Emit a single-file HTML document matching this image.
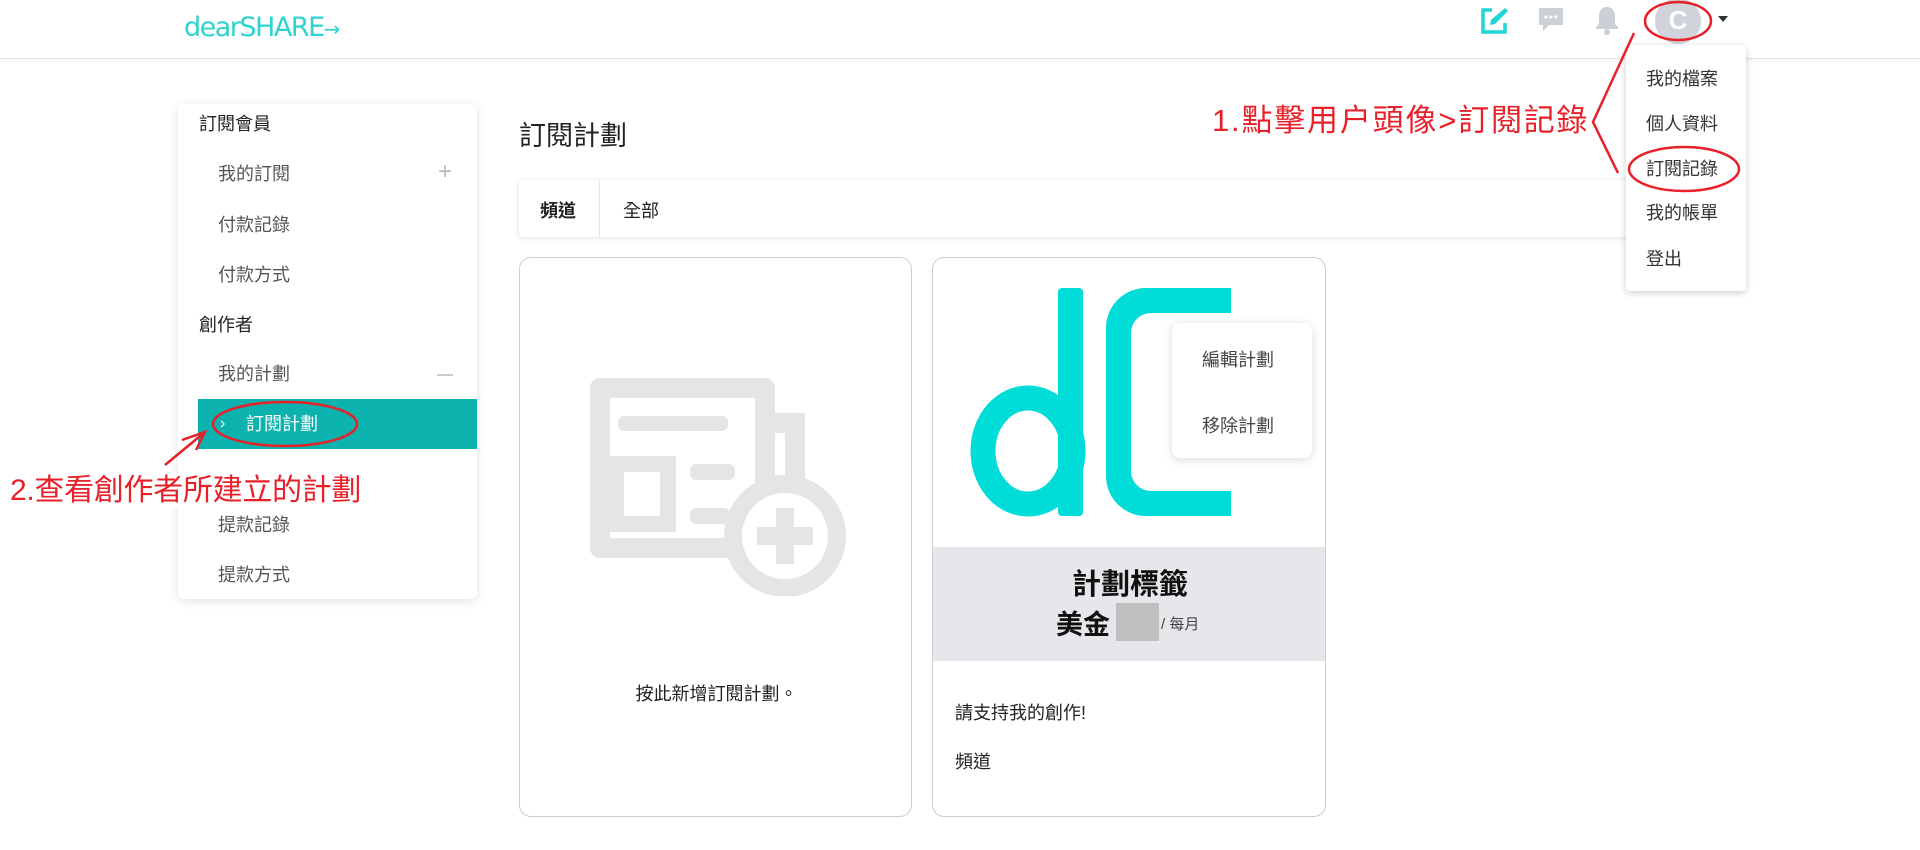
<!DOCTYPE html>
<html><head><meta charset="utf-8"><style>
*{box-sizing:border-box;margin:0;padding:0}
body{width:1920px;height:850px;overflow:hidden;background:#fff;font-family:"Liberation Sans","Noto Sans CJK TC",sans-serif;position:relative;color:#222}
.abs{position:absolute}
.hdr{left:0;top:0;width:1920px;height:59px;border-bottom:1px solid #e3e3e3;box-shadow:0 1px 3px rgba(0,0,0,.06)}
.side{left:178px;top:104px;width:299px;height:495px;background:#fff;border-radius:6px;box-shadow:0 2px 10px rgba(0,0,0,.12)}
.si{position:absolute;font-size:18px;color:#555;line-height:24px}
.sh{color:#222;left:21px}
.card{border:1px solid #ccc;border-radius:12px;background:#fff}
.red{color:#e8202a;font-size:31px;line-height:34px;white-space:nowrap}
.menu div{position:absolute;left:20px;font-size:18px;color:#333;line-height:24px}
</style></head><body>
<div class="abs hdr"></div>
<div class="abs" style="left:184px;top:10px;font-size:27px;color:#2fd3cf;letter-spacing:-1.5px;font-family:'DejaVu Sans',sans-serif;line-height:36px">dearSHARE<span style="font-size:20px">→</span></div>
<!-- icons -->
<svg class="abs" style="left:1478px;top:5px" width="32" height="32" viewBox="0 0 32 32"><path d="M14 5H5v22h22v-9" fill="none" stroke="#1fd6d2" stroke-width="3.5"/><path d="M27 3l3 3-13 13-5 1 1-5z" fill="#1fd6d2"/></svg>
<svg class="abs" style="left:1537px;top:6px" width="28" height="28" viewBox="0 0 28 28"><path d="M2 2h24v17H12l-6 6v-6H2z" fill="#ccd0d6"/><circle cx="9" cy="11" r="1.6" fill="#fff"/><circle cx="14" cy="11" r="1.6" fill="#fff"/><circle cx="19" cy="11" r="1.6" fill="#fff"/></svg>
<svg class="abs" style="left:1594px;top:4px" width="26" height="32" viewBox="0 0 26 32"><path d="M13 3c5 0 8 4 8 9v8l3 3v2H2v-2l3-3v-8c0-5 3-9 8-9z" fill="#ccd0d6"/><circle cx="13" cy="28" r="3" fill="#ccd0d6"/></svg>
<div class="abs" style="left:1655px;top:-2px;width:46px;height:46px;border-radius:50%;background:#d0d3d9;color:#fff;font-size:26px;font-weight:bold;text-align:center;line-height:44px">C</div>
<div class="abs" style="left:1718px;top:16px;width:0;height:0;border-left:5px solid transparent;border-right:5px solid transparent;border-top:6px solid #333"></div>
<!-- sidebar -->
<div class="abs side">
<div class="si sh" style="top:8px">訂閱會員</div>
<div class="si" style="left:40px;top:58px">我的訂閱</div>
<div class="si" style="left:260px;top:56px;color:#bbb;font-size:24px">+</div>
<div class="si" style="left:40px;top:109px">付款記錄</div>
<div class="si" style="left:40px;top:159px">付款方式</div>
<div class="si sh" style="top:209px">創作者</div>
<div class="si" style="left:40px;top:258px">我的計劃</div>
<div class="abs" style="left:259px;top:270px;width:16px;height:2px;background:#ccc"></div>
<div class="abs" style="left:20px;top:295px;width:279px;height:50px;background:#0cb3ae"></div>
<div class="si" style="left:42px;top:308px;color:#fff;font-size:16px">›</div>
<div class="si" style="left:68px;top:308px;color:#fff">訂閱計劃</div>
<div class="si" style="left:40px;top:409px">提款記錄</div>
<div class="si" style="left:40px;top:459px">提款方式</div>
</div>
<!-- main -->
<div class="abs" style="left:519px;top:114px;font-size:27px;color:#222">訂閱計劃</div>
<div class="abs" style="left:519px;top:180px;width:1200px;height:57px;background:#fff;border-radius:4px;box-shadow:0 1px 6px rgba(0,0,0,.12)">
<div class="abs" style="left:21px;top:17px;font-size:18px;font-weight:bold;color:#222">頻道</div>
<div class="abs" style="left:80px;top:0;width:1px;height:57px;background:#e5e5e5"></div>
<div class="abs" style="left:104px;top:17px;font-size:18px;color:#222">全部</div>
</div>
<div class="abs card" style="left:519px;top:257px;width:393px;height:560px">
<svg class="abs" style="left:60px;top:110px" width="270" height="228" viewBox="0 0 270 228"><g fill="none" stroke="#e5e5e5" stroke-width="20"><path d="M20 20h165v160H20z" stroke-linejoin="round"/><path d="M195 55h20v60"/></g><g fill="#e5e5e5"><rect x="38" y="48" width="110" height="15" rx="6"/><rect x="36" y="96" width="52" height="60" fill="none" stroke="#e5e5e5" stroke-width="16"/><rect x="110" y="96" width="45" height="16" rx="6"/><rect x="110" y="140" width="40" height="16" rx="6"/></g><circle cx="205" cy="168" r="52" fill="#fff" stroke="#e5e5e5" stroke-width="18"/><path d="M205 140v56M177 168h56" stroke="#e5e5e5" stroke-width="18"/></svg>
<div class="abs" style="left:0;width:393px;top:422px;text-align:center;font-size:18px;color:#222">按此新增訂閱計劃。</div>
</div>
<div class="abs card" style="left:932px;top:257px;width:394px;height:560px;overflow:hidden">
<svg class="abs" style="left:0;top:0" width="394" height="290" viewBox="0 0 394 290"><g fill="#00dcd8"><rect x="125" y="30" width="25" height="228" rx="4"/><path d="M298 30H213a40 40 0 0 0-40 40v148a40 40 0 0 0 40 40h85v-25h-80a20 20 0 0 1-20-20V75a20 20 0 0 1 20-20h80z"/></g><ellipse cx="95" cy="193" rx="45" ry="53" fill="none" stroke="#00dcd8" stroke-width="25"/></svg>
<div class="abs" style="left:0;top:289px;width:394px;height:114px;background:#e5e7eb">
<div class="abs" style="left:0;width:394px;top:14px;text-align:center;font-size:29px;font-weight:bold;color:#111">計劃標籤</div>
<div class="abs" style="left:123px;top:56px;font-size:27px;font-weight:bold;color:#111">美金</div>
<div class="abs" style="left:183px;top:56px;width:43px;height:38px;background:#c0c0c0"></div>
<div class="abs" style="left:228px;top:66px;font-size:15px;color:#444">/ 每月</div>
</div>
<div class="abs" style="left:22px;top:441px;font-size:18px;color:#222">請支持我的創作!</div>
<div class="abs" style="left:22px;top:490px;font-size:18px;color:#222">頻道</div>
</div>
<div class="abs" style="left:1172px;top:323px;width:140px;height:135px;background:#fff;border-radius:8px;box-shadow:0 2px 10px rgba(0,0,0,.15)">
<div class="abs" style="left:30px;top:23px;font-size:18px;color:#444">編輯計劃</div>
<div class="abs" style="left:30px;top:89px;font-size:18px;color:#444">移除計劃</div>
</div>
<!-- dropdown -->
<div class="abs menu" style="left:1626px;top:45px;width:120px;height:246px;background:#fff;border-radius:4px;box-shadow:0 2px 8px rgba(0,0,0,.2)">
<div style="top:22px">我的檔案</div><div style="top:67px">個人資料</div><div style="top:112px">訂閱記錄</div><div style="top:156px">我的帳單</div><div style="top:202px">登出</div>
</div>
<!-- annotations -->
<div class="abs red" style="left:1212px;top:104px;letter-spacing:1.8px">1.點擊用户頭像&gt;訂閱記錄</div>
<div class="abs red" style="left:10px;top:474px;background:#fff;font-size:30px;letter-spacing:-0.3px">2.查看創作者所建立的計劃</div>
<svg class="abs" style="left:0;top:0" width="1920" height="850"><g fill="none" stroke="#e8202a" stroke-width="2.5">
<ellipse cx="1678" cy="21" rx="33" ry="19"/>
<ellipse cx="1684" cy="169" rx="55" ry="22"/>
<ellipse cx="285" cy="424" rx="72" ry="22"/>
<path d="M1634 33L1593 122L1618 173"/>
<path d="M165 465L205 432M182 440L205 432L196 450"/>
</g></svg>
</body></html>
